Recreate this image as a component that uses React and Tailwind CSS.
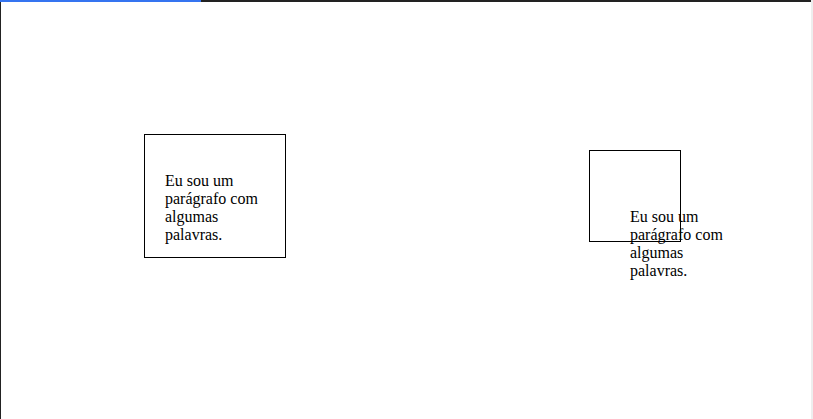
export default function App() {
  return (
    <div className="w-[813px] h-[419px] bg-white flex flex-col overflow-hidden" style={{ fontFamily: '"Liberation Serif", serif' }}>
      <div className="flex h-[2px] shrink-0">
        <div className="w-[201px] bg-[#3574f0]" />
        <div className="flex-1 bg-[#222222]" />
        <div className="w-[2px] bg-[#eeeeee]" />
      </div>
      <div className="flex flex-1 border-l border-[#222222]">
        <div className="flex flex-1 items-start">
          <div className="ml-[143px] mt-[132px] w-[142px] h-[124px] box-border border border-black pl-[20px] pt-[37px] text-[16px] leading-[18px] text-black">
            <p className="w-[100px]">Eu sou um parágrafo com algumas palavras.</p>
          </div>
          <div className="ml-[303px] mt-[148px] w-[92px] h-[92px] box-border border border-black text-[16px] leading-[18px] text-black">
            <p className="w-[100px] ml-[40px] mt-[57px]">Eu sou um parágrafo com algumas palavras.</p>
          </div>
        </div>
        <div className="w-[2px] bg-[#eeeeee]" />
      </div>
    </div>
  );
}
